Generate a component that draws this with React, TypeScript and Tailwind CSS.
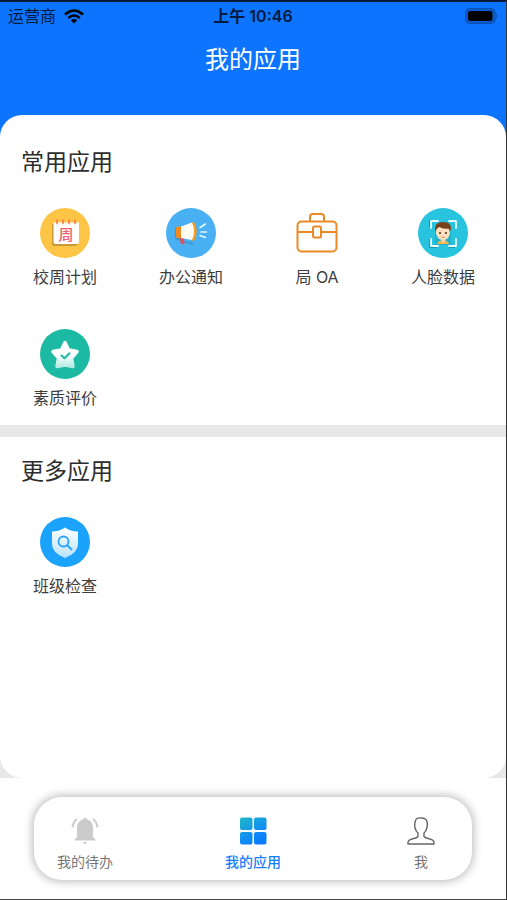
import type { ReactNode } from "react";

type AppItem = { name: string; icon: ReactNode };

function PlanIcon() {
  return (
    <svg viewBox="0 0 50 50" className="size-[50px]" aria-hidden="true">
      <circle cx="25" cy="25" r="25" fill="#fcc545" />
      <path d="M12 16v20q0 2 2 2h22l2-2V20z" fill="#c99a35" />
      <path d="M13.500 14.500H39v19.500q0 2-2 2H15.500q-2 0-2-2z" fill="#fffdfb" />
      <path d="M17 12v3.500M23 12v3.500M29 12v3.500M35 12v3.500" stroke="#f47c50" strokeWidth="1.600" strokeLinecap="round" />
      <text x="26" y="31.500" textAnchor="middle" fontSize="15" fontWeight="500" fill="#f0606c">周</text>
    </svg>
  );
}

function NoticeIcon() {
  return (
    <svg viewBox="0 0 50 50" className="size-[50px]" aria-hidden="true">
      <circle cx="25" cy="25" r="25" fill="#49b1f3" />
      <path d="M9 20h6v12l12 3v2l-14-4.500q-4-1-4-3z" fill="#2f80b5" opacity=".5" />
      <path d="M14 29l4 1 .5 6.500-4-1z" fill="#e2525d" />
      <path d="M10 20q0-1.500 1.500-1.500H16V30h-4.500q-1.500 0-1.500-1.500z" fill="#f28b1e" />
      <ellipse cx="27" cy="23.500" rx="3.600" ry="9.500" fill="#f59a23" />
      <path d="M15 18.500L26 14.500q2 4 2 9t-2 8.500L15 30z" fill="#fffaf2" />
      <path d="M34 19.500l5.500-3.500M35 24h5.500M34 27.500l5.500 2" stroke="#e5f6ff" strokeWidth="1.600" strokeLinecap="round" />
    </svg>
  );
}

function BriefcaseIcon() {
  return (
    <svg viewBox="0 0 50 50" className="size-[50px]" fill="none" stroke="#e98a26" strokeWidth="2" strokeLinejoin="round" aria-hidden="true">
      <rect x="5.500" y="13.500" width="39" height="30" rx="4" />
      <path d="M18 13V9q0-3 3-3h8q3 0 3 3v4" />
      <path d="M6 24h15M29 24h15" />
      <rect x="21" y="18.500" width="8" height="11" rx="1.500" />
    </svg>
  );
}

function FaceIcon() {
  return (
    <svg viewBox="0 0 50 50" className="size-[50px]" aria-hidden="true">
      <circle cx="25" cy="25" r="25" fill="#27c3df" />
      <path d="M12 20v-7h7M12 31v8h7M31 39h6" fill="none" stroke="#1499ad" strokeWidth="2" />
      <path d="M17 18h16v19H17z" fill="#16a2b8" opacity=".5" />
      <path d="M13 20v-7h7M31 13h7v7M38 31v7h-7M20 38h-7v-7" fill="none" stroke="#e9fcff" strokeWidth="1.800" strokeLinejoin="round" strokeLinecap="round" />
      <path d="M19 36q1-3.500 5-3.500h2q4 0 5 3.500z" fill="#f1b34c" />
      <path d="M23 30h4.500v3.500L25 35l-2-1.500z" fill="#f5cda5" />
      <path d="M18 20q0-3 7-3t7 3v4q0 7-7 8-7-1-7-8z" fill="#fde1bf" />
      <path d="M17.500 24q-2-10 7-10 8.500-.5 8.500 6l-1 4-1.500-3.500q-6 1-9-1.500-3 1-4 5z" fill="#7a421c" />
      <circle cx="22" cy="25" r="1" fill="#4a2b16" />
      <circle cx="28" cy="25" r="1" fill="#4a2b16" />
      <path d="M23.500 29q1.500 1 3 0" fill="none" stroke="#d8664f" strokeWidth=".8" />
    </svg>
  );
}

function StarIcon() {
  return (
    <svg viewBox="0 0 50 50" className="size-[50px]" aria-hidden="true">
      <defs>
        <linearGradient id="star" x1="0" y1="0" x2="0" y2="1">
          <stop offset=".5" stopColor="#fff" />
          <stop offset="1" stopColor="#b5ebe2" />
        </linearGradient>
      </defs>
      <circle cx="25" cy="25" r="25" fill="#1cbaa3" />
      <path d="M25 13.500l3.500 7.500 8.500 1.500-5.500 6.500 1.500 8.500-8-1.500-8 1.500 1.500-8.500-5.500-6.500 8.500-1.500z" fill="url(#star)" stroke="url(#star)" strokeWidth="3.500" strokeLinejoin="round" />
      <path d="M21.500 26.500l3 2.700 5-5" fill="none" stroke="#1cbaa3" strokeWidth="2" strokeLinecap="round" strokeLinejoin="round" />
    </svg>
  );
}

function ShieldIcon() {
  return (
    <svg viewBox="0 0 50 50" className="size-[50px]" aria-hidden="true">
      <defs>
        <linearGradient id="shield" x1="0" y1="0" x2="0" y2="1">
          <stop offset="0" stopColor="#fff" />
          <stop offset="1" stopColor="#b9e2ff" />
        </linearGradient>
      </defs>
      <circle cx="25" cy="25" r="25" fill="#1ba2fb" />
      <path d="M25 10.500q5.500 4 13 4V27q0 9-13 14Q12 36 12 27V14.500q7.500 0 13-4z" fill="url(#shield)" />
      <circle cx="23.500" cy="24.500" r="5" fill="none" stroke="#2ba5f7" strokeWidth="1.800" />
      <path d="M27.500 28.500l4 4" stroke="#2ba5f7" strokeWidth="2" strokeLinecap="round" />
    </svg>
  );
}

function BellIcon() {
  return (
    <svg viewBox="0 0 28 28" className="size-7" fill="#cbcbcb" aria-hidden="true">
      <path d="M14 .5q1.500 0 1.800 1.800Q22 4 22 11v9l2.500 2.500v1h-21v-1L6 20v-9q0-7 6.200-8.700Q12.500.5 14 .5z" />
      <path d="M12 25h4q-.5 2-2 2t-2-2z" />
      <path d="M6 2Q2 5 1.500 10.500M22 2q4 3 4.500 8.500" fill="none" stroke="#cbcbcb" strokeWidth="2" />
    </svg>
  );
}

function GridIcon() {
  return (
    <svg viewBox="0 0 28 28" className="size-7" aria-hidden="true">
      <defs>
        <linearGradient id="tiles" x1="0" y1="0" x2=".6" y2="1">
          <stop offset="0" stopColor="#1cb9c4" />
          <stop offset=".7" stopColor="#118cf6" />
          <stop offset="1" stopColor="#0c7bff" />
        </linearGradient>
      </defs>
      <path
        d="M3 .5h8.500q2 0 2 2v8.500q0 2-2 2H3q-2 0-2-2V2.500q0-2 2-2zM17 .5h8.500q2 0 2 2v8.500q0 2-2 2H17q-2 0-2-2V2.500q0-2 2-2zM3 15h8.500q2 0 2 2v8.500q0 2-2 2H3q-2 0-2-2V17q0-2 2-2zM17 15h8.500q2 0 2 2v8.500q0 2-2 2H17q-2 0-2-2V17q0-2 2-2z"
        fill="url(#tiles)"
      />
    </svg>
  );
}

function PersonIcon() {
  return (
    <svg viewBox="0 0 28 28" className="size-7" fill="none" stroke="#666" strokeWidth="1.400" strokeLinejoin="round" aria-hidden="true">
      <path d="M10 1.500q2-.8 4.500-.5 5 0 5.500 4 .8 2.500-.2 6-.8 3.500-2.800 5v3.500q1 1.500 5 2.200 5 1 5 3.800v1.500H1V25.500q0-2.800 5-3.800 4-.7 5-2.200V16Q9 14.500 8 11 7.300 7 8.300 4.500 8.500 2.500 10 1.500z" />
    </svg>
  );
}

const commonApps: AppItem[] = [
  { name: "校周计划", icon: <PlanIcon /> },
  { name: "办公通知", icon: <NoticeIcon /> },
  { name: "局 OA", icon: <BriefcaseIcon /> },
  { name: "人脸数据", icon: <FaceIcon /> },
  { name: "素质评价", icon: <StarIcon /> },
];

const moreApps: AppItem[] = [{ name: "班级检查", icon: <ShieldIcon /> }];

const tabs = [
  { name: "我的待办", icon: <BellIcon />, active: false },
  { name: "我的应用", icon: <GridIcon />, active: true },
  { name: "我", icon: <PersonIcon />, active: false },
];

function AppSection({ title, items }: { title: string; items: AppItem[] }) {
  return (
    <section className="pt-5 pb-[15px]">
      <h2 className="px-[21px] text-[23px] leading-7 text-[#2d2d2d]">{title}</h2>
      <div className="mt-8 grid grid-cols-4 gap-y-10 pl-0.5">
        {items.map((item) => (
          <button key={item.name} type="button" className="flex flex-col items-center gap-[7px]">
            {item.icon}
            <span className="text-base leading-6 text-[#3d3d3d]">{item.name}</span>
          </button>
        ))}
      </div>
    </section>
  );
}

function StatusBar() {
  return (
    <div className="grid grid-cols-3 items-center px-2 pt-0.5 text-base leading-6 text-[#041a3d]">
      <div className="flex items-center gap-2">
        <span>运营商</span>
        <svg viewBox="0 0 20 15" className="h-[15px] w-5 text-black" fill="none" stroke="currentColor" strokeWidth="2.600" aria-hidden="true">
          <path d="M1 5.500q9-8 18 0M4.300 9q5.700-5 11.400 0" />
          <path d="M10 14.500l-3.200-3.200q3.200-2.400 6.400 0z" fill="currentColor" stroke="none" />
        </svg>
      </div>
      <span className="text-center font-semibold whitespace-nowrap">上午 10:46</span>
      <svg viewBox="0 0 33 16" className="h-4 w-[33px] justify-self-end" aria-hidden="true">
        <rect x=".8" y=".8" width="29" height="14.400" rx="4" fill="#0a60dc" stroke="#0b4fae" strokeWidth="1.400" />
        <rect x="3" y="3" width="24.500" height="10" rx="2" fill="#000" />
        <path d="M31.300 5.500q2 2.500 0 5z" fill="#0b4fae" />
      </svg>
    </div>
  );
}

export default function App() {
  return (
    <div className="flex min-h-screen flex-col border-t-2 border-r border-b border-t-[#061a3a] border-r-[#333] border-b-[#444] bg-[#e8e8e8] font-['Inter','Noto_Sans_CJK_SC',sans-serif]">
      <header className="bg-[#0d74ff] pb-16">
        <StatusBar />
        <h1 className="mt-4 text-center text-2xl leading-8 text-white">我的应用</h1>
      </header>

      <main className="-mt-[25px] flex flex-1 flex-col overflow-hidden rounded-[22px] bg-white pt-[13px]">
        <AppSection title="常用应用" items={commonApps} />
        <div className="h-3 bg-[#e8e8e8]" />
        <AppSection title="更多应用" items={moreApps} />
      </main>

      <div className="bg-white px-[34px] pt-[19px] pb-[19px]">
        <nav className="flex justify-between rounded-[28px] bg-white px-[23px] pt-5 pb-2 shadow-[0_0_8px_2px_rgba(0,0,0,0.25)]">
          {tabs.map((tab) => (
            <button
              key={tab.name}
              type="button"
              aria-current={tab.active ? "page" : undefined}
              className={`flex w-14 flex-col items-center gap-[7px] text-sm leading-5 ${tab.active ? "font-medium text-[#1680fb]" : "text-[#777]"}`}
            >
              {tab.icon}
              <span className="whitespace-nowrap">{tab.name}</span>
            </button>
          ))}
        </nav>
      </div>
    </div>
  );
}
